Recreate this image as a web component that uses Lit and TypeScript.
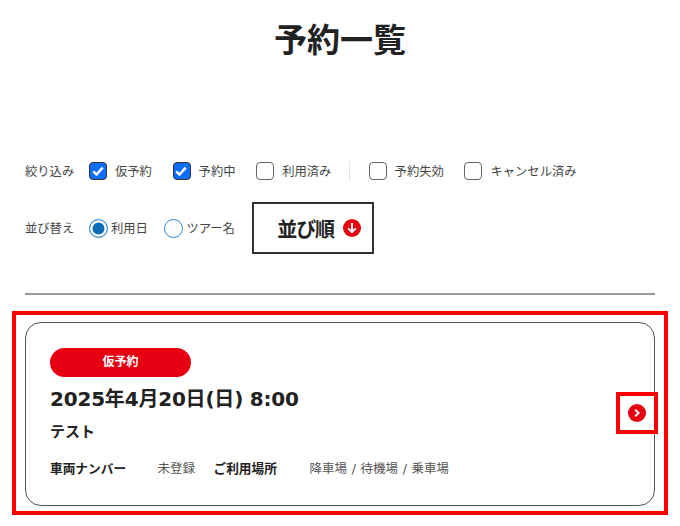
import { css, html, LitElement } from "lit";
import { customElement } from "lit/decorators.js";

const filters = [
    { label: "仮予約", checked: true },
    { label: "予約中", checked: true },
    { label: "利用済み", checked: false },
    { label: "予約失効", checked: false },
    { label: "キャンセル済み", checked: false },
];

@customElement("app-root")
export class AppRoot extends LitElement {
    renderFilter(f: { label: string; checked: boolean }) {
        return html`
            <label class="check">
                <span class="box ${f.checked ? "on" : ""}">
                    ${f.checked
                        ? html`<svg width="18" height="18" viewBox="0 0 18 18"><path d="M4.2 9.3l3.3 3.3 6.2-7" fill="none" stroke="#fff" stroke-width="2.4"/></svg>`
                        : ""}
                </span>
                <span>${f.label}</span>
            </label>
        `;
    }

    render() {
        return html`
            <h1>予約一覧</h1>

            <div class="row filters">
                <span class="row-label">絞り込み</span>
                ${filters.slice(0, 3).map((f) => this.renderFilter(f))}
                <span class="divider"></span>
                ${filters.slice(3).map((f) => this.renderFilter(f))}
            </div>

            <div class="row sort">
                <span class="row-label">並び替え</span>
                <label class="radio"><span class="dot on"></span>利用日</label>
                <label class="radio"><span class="dot"></span>ツアー名</label>
                <button class="order">
                    <span>並び順</span>
                    <svg width="18" height="18" viewBox="0 0 18 18">
                        <circle cx="9" cy="9" r="9" fill="#e60012"/>
                        <path d="M9 4v9M5.2 9.4L9 13.2l3.8-3.8" fill="none" stroke="#fff" stroke-width="2"/>
                    </svg>
                </button>
            </div>

            <hr />

            <div class="highlight">
                <div class="card">
                    <span class="pill">仮予約</span>
                    <div class="date">2025年4月20日(日) 8:00</div>
                    <div class="name">テスト</div>
                    <div class="details">
                        <strong class="plate-key">車両ナンバー</strong>
                        <span class="plate-val">未登録</span>
                        <strong class="place-key">ご利用場所</strong>
                        <span class="places">降車場 / 待機場 / 乗車場</span>
                    </div>
                </div>
                <div class="arrow-mark">
                    <svg width="18" height="18" viewBox="0 0 18 18">
                        <circle cx="9" cy="9" r="9" fill="#e60012"/>
                        <path d="M7.2 5.6L10.6 9l-3.4 3.4" fill="none" stroke="#fff" stroke-width="2"/>
                    </svg>
                </div>
            </div>
        `;
    }

    static styles = css`
      :host {
        display: block;
        width: 680px;
        height: 526px;
        overflow: hidden;
        background: #fff;
        color: #222;
        font-family: "DejaVu Sans", "Noto Sans CJK JP", sans-serif;
        font-size: 12.3px;
      }

      h1 {
        margin: 0;
        padding-top: 18px;
        height: 46px;
        line-height: 46px;
        text-align: center;
        font-size: 33px;
        font-weight: 700;
      }

      .row {
        display: flex;
        align-items: center;
        margin: 0 25px;
      }

      .filters {
        margin-top: 95px;
        height: 24px;
      }

      .row-label {
        width: 64px;
        color: #444;
      }

      .check {
        display: flex;
        align-items: center;
        gap: 8px;
        margin-right: 20.7px;
        color: #444;
      }

      .box {
        box-sizing: border-box;
        width: 18px;
        height: 18px;
        border: 1.5px solid #666;
        border-radius: 4px;
        background: #fff;
      }

      .box.on {
        background: #0d6efd;
        border-color: #333;
      }

      .box svg {
        display: block;
        margin: -1.5px;
      }

      .divider {
        width: 1px;
        height: 20px;
        background: #e4e4e4;
        margin: 0 19px 0 -3.5px;
      }

      .sort {
        margin-top: 19px;
        height: 52px;
      }

      .radio {
        display: flex;
        align-items: center;
        gap: 3px;
        margin-right: 16.5px;
        color: #444;
      }

      .dot {
        box-sizing: border-box;
        width: 19px;
        height: 19px;
        border: 1px solid #3a8ad0;
        border-radius: 50%;
      }

      .dot.on {
        background: #0b6bb5;
        box-shadow: inset 0 0 0 2.5px #fff;
      }

      .order {
        box-sizing: border-box;
        width: 122px;
        height: 52px;
        margin-left: 1px;
        padding: 0 11px 0 23px;
        display: flex;
        align-items: center;
        justify-content: space-between;
        border: 2px solid #333;
        background: #fff;
        font: inherit;
        font-size: 20px;
        font-weight: 700;
        letter-spacing: -1.2px;
        color: #222;
      }

      hr {
        margin: 39px 25px 0;
        border: 0;
        border-top: 2px solid #999;
      }

      .highlight {
        position: relative;
        box-sizing: border-box;
        margin: 16px 12px 0;
        height: 204px;
        padding: 7px 9px;
        border: 4px solid #f00;
      }

      .card {
        box-sizing: border-box;
        height: 184px;
        padding: 25px 24px;
        border: 1px solid #555;
        border-radius: 16px;
      }

      .pill {
        display: block;
        width: 141px;
        height: 29px;
        line-height: 29px;
        border-radius: 15px;
        background: #e60012;
        color: #fff;
        text-align: center;
        font-size: 12px;
        font-weight: 700;
      }

      .date {
        margin-top: 7px;
        height: 30px;
        line-height: 30px;
        font-size: 20px;
        font-weight: 700;
        letter-spacing: -0.2px;
      }

      .name {
        margin-top: 6px;
        height: 24px;
        line-height: 24px;
        font-size: 15px;
        font-weight: 700;
      }

      .details {
        display: flex;
        margin-top: 15px;
        line-height: 20px;
        font-size: 12.5px;
        color: #555;
      }

      .details strong {
        color: #222;
        font-size: 12.7px;
      }

      .places {
        word-spacing: 0.7px;
      }

      .plate-key {
        width: 107.5px;
      }

      .plate-val {
        width: 56px;
      }

      .place-key {
        width: 96px;
      }

      .arrow-mark {
        position: absolute;
        left: 600px;
        top: 77px;
        box-sizing: border-box;
        width: 42px;
        height: 42px;
        border: 4px solid #f00;
        display: flex;
        align-items: center;
        justify-content: center;
        background: #fff;
      }
    `;
}
